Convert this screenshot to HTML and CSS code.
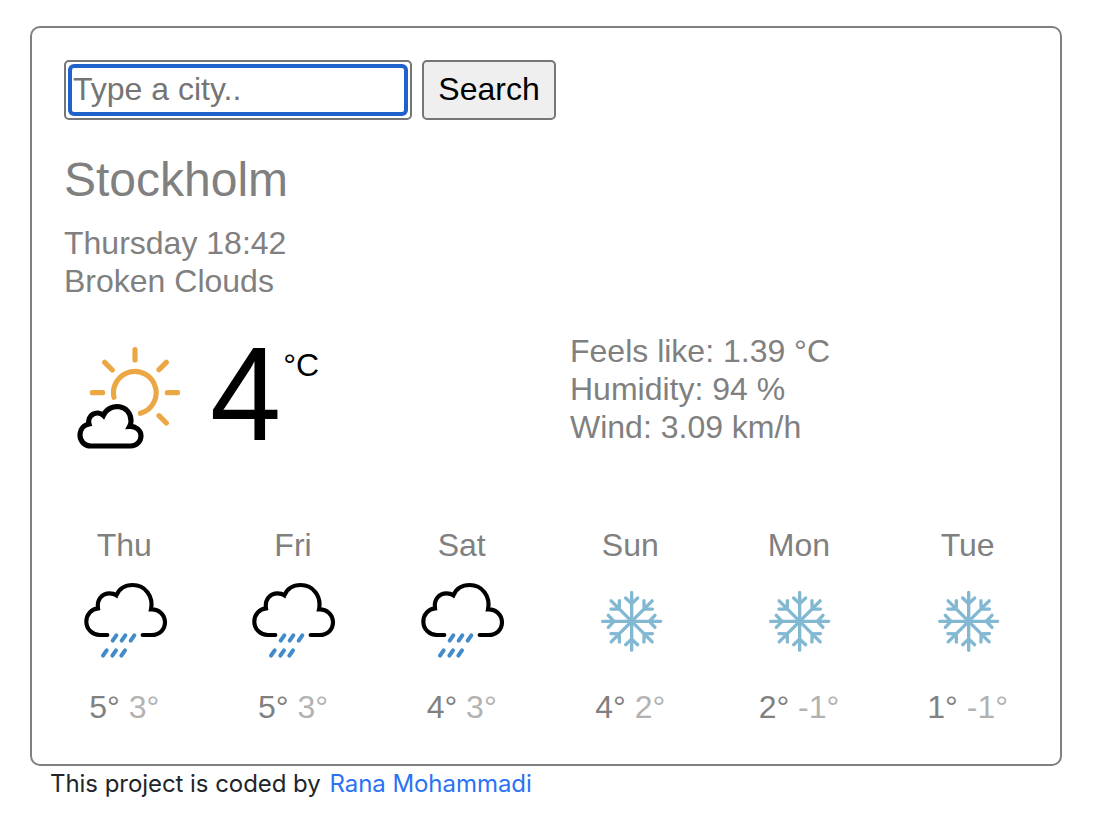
FILE: index.html
```
<!DOCTYPE html>
<html lang="en">
<head>
<meta charset="utf-8">
<title>Weather</title>
<link rel="stylesheet" href="styles.css">
</head>
<body>
<svg class="defs" width="0" height="0" aria-hidden="true">
  <symbol id="rain" viewBox="0 0 360 300">
    <path d="M112 195H91A40.5 40.5 0 0 1 49 155C49 134 64 117 84 115C80 88 96 70 119 70Q131 70 139 76C148 55 167 45 188 45C225 45 251 78 243 118C267 117 285 135 285 157C285 179 268 195 245 195H218" fill="none" stroke="#000" stroke-width="12.5" stroke-linecap="round"/>
    <path d="M139 196l-11 16M166 196l-11 16M193 196l-11 16M110 241l-11 16M138 241l-11 16M165 241l-11 16" stroke="#428bca" stroke-width="12" stroke-linecap="round"/>
  </symbol>
  <symbol id="snow" viewBox="0 0 270 240">
    <g fill="none" stroke="#82b8d2" stroke-width="10" stroke-linecap="round">
      <g id="axis"><path id="arm" d="M125 124V37M107 54L125 71L143 54"/><use href="#arm" transform="rotate(90 125 124)"/><use href="#arm" transform="rotate(180 125 124)"/><use href="#arm" transform="rotate(270 125 124)"/></g>
      <use href="#axis" transform="rotate(45 125 124)"/>
    </g>
  </symbol>
</svg>
<main class="card">
  <form class="search">
    <span class="field"><input class="city-input" type="text" placeholder="Type a city.." aria-label="City"></span>
    <button class="submit" type="button">Search</button>
  </form>
  <h1 class="city">Stockholm</h1>
  <div class="meta"><div>Thursday 18:42</div><div>Broken Clouds</div></div>
  <section class="current">
    <div class="now">
      <svg class="now-icon" viewBox="0 0 360 390" fill="none" stroke-width="15.5">
        <path d="M162 187A64 64 0 1 1 241 235M225 44V75M134 82l23 23M319 82l-22 22M97 173h31M322 173h31M297 242l22 22" stroke="#eba743" stroke-linecap="round"/>
        <path d="M92 333H212A31 31 0 0 0 243 302C243 286 227 273 209 274Q213 267 213 258C213 208 149 200 130 241C111 223 80 242 87 267C71 270 60 283 60 301A32 32 0 0 0 92 333Z" stroke="#000"/>
      </svg>
      <span class="temperature">4</span><span class="unit">°C</span>
    </div>
    <div class="details"><div>Feels like: 1.39 °C</div><div>Humidity: 94 %</div><div>Wind: 3.09 km/h</div></div>
  </section>
  <section class="forecast">
    <div class="day"><div>Thu</div><svg class="rain"><use href="#rain"/></svg><div>5° <span class="low">3°</span></div></div>
    <div class="day"><div>Fri</div><svg class="rain"><use href="#rain"/></svg><div>5° <span class="low">3°</span></div></div>
    <div class="day"><div>Sat</div><svg class="rain"><use href="#rain"/></svg><div>4° <span class="low">3°</span></div></div>
    <div class="day"><div>Sun</div><svg class="snow"><use href="#snow"/></svg><div>4° <span class="low">2°</span></div></div>
    <div class="day"><div>Mon</div><svg class="snow"><use href="#snow"/></svg><div>2° <span class="low">-1°</span></div></div>
    <div class="day"><div>Tue</div><svg class="snow"><use href="#snow"/></svg><div>1° <span class="low">-1°</span></div></div>
  </section>
</main>
<footer class="credit">This project is coded by <a class="author" href="#">Rana Mohammadi</a></footer>
</body>
</html>
```
FILE: styles.css
```
* { box-sizing: border-box; }
body {
  margin: 0;
  padding: 26px 32px 0 30px;
  background: #fff;
  color: #808080;
  font: 32px/38px "Liberation Sans", Arial, sans-serif;
}
.defs { position: absolute; }
.card {
  height: 740px;
  padding: 32px;
  border: 2px solid #808080;
  border-radius: 10px;
}
.search { display: flex; gap: 10px; height: 60px; }
.field {
  width: 348px;
  padding: 2px;
  border: 2px solid #767676;
  border-radius: 5px;
}
.city-input {
  display: block;
  width: 340px;
  height: 52px;
  padding: 0 0 2px 1px;
  border: 4px solid #1f62cc;
  border-radius: 6px;
  outline: none;
  background: #fff;
  font: inherit;
}
.city-input::placeholder { color: #757575; opacity: 1; }
.submit {
  width: 134px;
  padding: 0 0 2px;
  border: 2px solid #767676;
  border-radius: 5px;
  background: #efefef;
  color: #000;
  font: inherit;
}
.city { margin: 31px 0 15px; font-size: 48px; font-weight: 400; line-height: 58px; }
.current { display: grid; grid-template-columns: 506px 1fr; height: 194px; margin-top: 32px; }
.now { display: flex; align-items: flex-start; color: #000; }
.now-icon { flex: none; width: 120px; height: 130px; margin: 3px 30px 0 -4px; }
.temperature { font-size: 128px; line-height: 128px; transform: scaleY(1.045); transform-origin: 0 108px; }
.unit { margin: 14px 0 0 2px; }
.forecast { display: grid; grid-template-columns: repeat(6, 1fr); margin: 0 -24px; text-align: center; }
.day { display: flex; flex-direction: column; align-items: center; }
.rain { width: 120px; height: 100px; margin: 6px 0 18px 11px; }
.snow { width: 90px; height: 80px; margin: 16px 0 28px 9px; }
.low { opacity: .6; }
.credit {
  padding-left: 20px;
  color: #212529;
  font: 24px/36px Inter, sans-serif;
  letter-spacing: -.05px;
  white-space: pre;
}
.author { margin-left: 2px; color: #2b72f5; text-decoration: none; }
```
